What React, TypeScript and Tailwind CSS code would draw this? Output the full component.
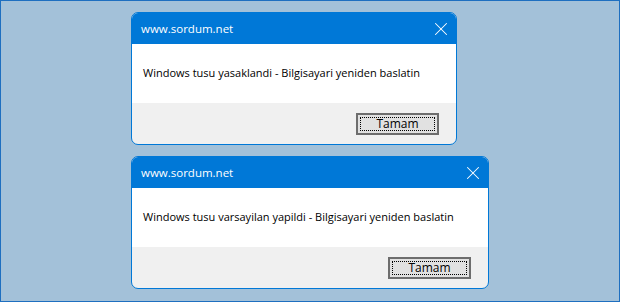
import { X } from "lucide-react";

function Dialog({ width, message }: { width: string; message: string }) {
  return (
    <div className={`${width} h-[133px] flex flex-col rounded-[7px] border border-[#0078d7] bg-[#f0f0f0] overflow-hidden`}>
      <div className="h-[31px] bg-[#0078d7] flex items-center justify-between pl-[9px] pr-[4px] text-white text-[11.5px]">
        <span>www.sordum.net</span>
        <X size={22} strokeWidth={1.1} />
      </div>
      <div className="h-[59px] bg-white flex items-center pl-[11px] text-[11px] font-medium text-black">
        {message}
      </div>
      <div className="flex-1 flex items-center justify-end pr-[17px]">
        <button className="w-[83px] h-[22px] border-2 border-[#6d6d6d] bg-[#e1e1e1] p-[2px] text-[12px] text-black">
          <div className="h-full w-full border border-dotted border-black flex items-center justify-center leading-none">
            Tamam
          </div>
        </button>
      </div>
    </div>
  );
}

export default function App() {
  return (
    <div
      className="w-[620px] h-[302px] bg-[#a3c1d9] border border-[#1e6fc0] flex flex-col pl-[130px] pt-[11px] gap-[11px]"
      style={{ fontFamily: '"Open Sans", "Noto Sans", sans-serif' }}
    >
      <Dialog width="w-[326px]" message="Windows tusu yasaklandi - Bilgisayari yeniden baslatin" />
      <Dialog width="w-[358px]" message="Windows tusu varsayilan yapildi - Bilgisayari yeniden baslatin" />
    </div>
  );
}
